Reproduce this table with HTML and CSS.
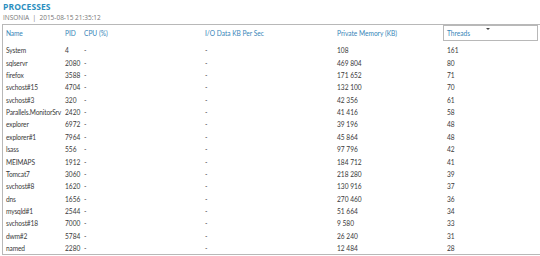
FILE: index.html
```html
<!DOCTYPE html>
<html>
<head>
<meta charset="utf-8">
<link rel="stylesheet" href="styles.css">
</head>
<body>
<div class="page">
  <div class="title">PROCESSES</div>
  <div class="subtitle">INSONIA &nbsp;|&nbsp; 2015-08-15 21:35:12</div>
  <div class="panel">
    <div class="row head">
      <div class="c name">Name</div>
      <div class="c pid">PID</div>
      <div class="c cpu">CPU (%)</div>
      <div class="c io">I/O Data KB Per Sec</div>
      <div class="c mem">Private Memory (KB)</div>
      <div class="c thr sel">Threads<span class="arrow"></span></div>
    </div>
    <div class="row"><div class="c name">System</div><div class="c pid">4</div><div class="c cpu">-</div><div class="c io">-</div><div class="c mem">108</div><div class="c thr">161</div></div>
    <div class="row"><div class="c name">sqlservr</div><div class="c pid">2080</div><div class="c cpu">-</div><div class="c io">-</div><div class="c mem">469 804</div><div class="c thr">80</div></div>
    <div class="row"><div class="c name">firefox</div><div class="c pid">3588</div><div class="c cpu">-</div><div class="c io">-</div><div class="c mem">171 652</div><div class="c thr">71</div></div>
    <div class="row"><div class="c name">svchost#15</div><div class="c pid">4704</div><div class="c cpu">-</div><div class="c io">-</div><div class="c mem">132 100</div><div class="c thr">70</div></div>
    <div class="row"><div class="c name">svchost#3</div><div class="c pid">320</div><div class="c cpu">-</div><div class="c io">-</div><div class="c mem">42 356</div><div class="c thr">61</div></div>
    <div class="row"><div class="c name">Parallels.MonitorSrv</div><div class="c pid">2420</div><div class="c cpu">-</div><div class="c io">-</div><div class="c mem">41 416</div><div class="c thr">58</div></div>
    <div class="row"><div class="c name">explorer</div><div class="c pid">6972</div><div class="c cpu">-</div><div class="c io">-</div><div class="c mem">39 196</div><div class="c thr">48</div></div>
    <div class="row"><div class="c name">explorer#1</div><div class="c pid">7964</div><div class="c cpu">-</div><div class="c io">-</div><div class="c mem">45 864</div><div class="c thr">48</div></div>
    <div class="row"><div class="c name">lsass</div><div class="c pid">556</div><div class="c cpu">-</div><div class="c io">-</div><div class="c mem">97 796</div><div class="c thr">42</div></div>
    <div class="row"><div class="c name">MEIMAPS</div><div class="c pid">1912</div><div class="c cpu">-</div><div class="c io">-</div><div class="c mem">184 712</div><div class="c thr">41</div></div>
    <div class="row"><div class="c name">Tomcat7</div><div class="c pid">3060</div><div class="c cpu">-</div><div class="c io">-</div><div class="c mem">218 280</div><div class="c thr">39</div></div>
    <div class="row"><div class="c name">svchost#8</div><div class="c pid">1620</div><div class="c cpu">-</div><div class="c io">-</div><div class="c mem">130 916</div><div class="c thr">37</div></div>
    <div class="row"><div class="c name">dns</div><div class="c pid">1656</div><div class="c cpu">-</div><div class="c io">-</div><div class="c mem">270 460</div><div class="c thr">36</div></div>
    <div class="row"><div class="c name">mysqld#1</div><div class="c pid">2544</div><div class="c cpu">-</div><div class="c io">-</div><div class="c mem">51 664</div><div class="c thr">34</div></div>
    <div class="row"><div class="c name">svchost#18</div><div class="c pid">7000</div><div class="c cpu">-</div><div class="c io">-</div><div class="c mem">9 580</div><div class="c thr">33</div></div>
    <div class="row"><div class="c name">dwm#2</div><div class="c pid">5784</div><div class="c cpu">-</div><div class="c io">-</div><div class="c mem">26 240</div><div class="c thr">31</div></div>
    <div class="row last"><div class="c name">named</div><div class="c pid">2280</div><div class="c cpu">-</div><div class="c io">-</div><div class="c mem">12 484</div><div class="c thr">28</div></div>
  </div>
</div>
</body>
</html>
```
FILE: styles.css
```css
html, body {
  margin: 0;
  padding: 0;
  background: #ffffff;
}
body {
  width: 540px;
  height: 256px;
  overflow: hidden;
  font-family: Lato, "Open Sans", sans-serif;
  color: #3a3a3a;
}
.page {
  padding: 2px 0 0 3px;
}
.title {
  font-family: "Open Sans", sans-serif;
  font-size: 8.5px;
  font-weight: 700;
  color: #2b8fc0;
  line-height: 10px;
  letter-spacing: 0.1px;
}
.subtitle {
  font-family: "Open Sans", sans-serif;
  font-size: 6.5px;
  color: #777;
  line-height: 9px;
  margin-top: 1px;
}
.panel {
  margin: 2px 0 0 -1px;
  border: 1px solid #b8b8b8;
  border-right: none;
  height: 229px;
  overflow: hidden;
  padding-left: 3px;
}
.row {
  display: grid;
  grid-template-columns: 59px 18px 122px 132px 110px 91px;
  height: 12.38px;
  align-items: center;
  font-size: 6.6px;
  white-space: nowrap;
}
.c.name {
  letter-spacing: -0.15px;
}
.row.head {
  height: 16px;
  margin-bottom: 3px;
  color: #3585b8;
}
.row.head .c {
  line-height: 14px;
}
.c.sel {
  position: relative;
  border: 1px solid #b8b8b8;
  padding-left: 3px;
  height: 14px;
  margin-left: -4px;
  color: #3585b8;
}
.arrow {
  position: absolute;
  left: 42px;
  top: 2px;
  width: 0;
  height: 0;
  border-left: 2px solid transparent;
  border-right: 2px solid transparent;
  border-top: 2.5px solid #444;
}
.c.cpu {
  padding-left: 1px;
}
```
